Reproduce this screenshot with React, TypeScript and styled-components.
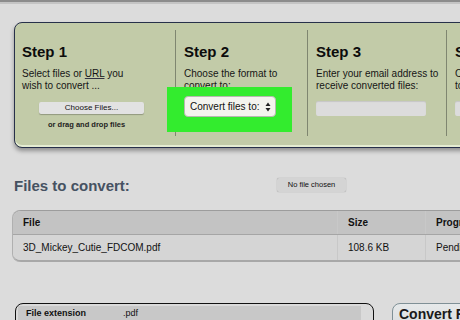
import React from 'react'
import styled, { createGlobalStyle } from 'styled-components'

const GlobalStyle = createGlobalStyle`
  html, body {
    margin: 0;
    padding: 0;
    width: 460px;
    height: 320px;
    overflow: hidden;
    background: #dcdcdc;
    font-family: "Liberation Sans", Arial, sans-serif;
    color: #111;
  }
`

const Page = styled.div`
  width: 460px;
  height: 320px;
  overflow: hidden;
  position: relative;
  border-top: 2px solid #8c8c8c;
  box-sizing: border-box;
  .topline {
    height: 2px;
    background: #c4c4c4;
  }
`

const Content = styled.div`
  padding: 18px 0 0 14px;
  width: 600px;
`

const StepsPanel = styled.div`
  display: flex;
  width: 560px;
  height: 126px;
  box-sizing: border-box;
  background: #c2cba8;
  border: 1.5px solid #27304a;
  border-radius: 8px;
  box-shadow: 0 3px 4px rgba(0, 0, 0, 0.35), inset 0 -2px 0 #e4ecd2;
`

const StepCol = styled.div<{ $w: number; $first?: boolean }>`
  width: ${p => p.$w}px;
  flex: none;
  box-sizing: border-box;
  margin: 7px 0 11px;
  padding: 13px 0 0 ${p => (p.$first ? 7 : 8)}px;
  border-left: ${p => (p.$first ? 'none' : '1px solid #7f8670')};
  display: flex;
  flex-direction: column;
`

const StepTitle = styled.h2`
  margin: 0;
  font-size: 15px;
  font-weight: bold;
  line-height: 18px;
  color: #0c0c0c;
`

const StepText = styled.p`
  margin: 7px 0 0;
  font-size: 10px;
  line-height: 12px;
  color: #151515;
  white-space: nowrap;
  u {
    text-decoration-color: #334;
  }
`

const FileButton = styled.div`
  margin: 10px 0 0 17px;
  width: 105px;
  height: 12px;
  background: #e2e2e2;
  border-radius: 2px;
  box-shadow: 0 1px 1px rgba(0, 0, 0, 0.25);
  font-size: 8px;
  line-height: 12px;
  text-align: center;
  color: #111;
`

const DropHint = styled.div`
  margin: 6px 0 0 26px;
  font-size: 7.5px;
  font-weight: bold;
  color: #222;
`

const Highlight = styled.div`
  position: relative;
  margin: -5px 0 0 -17px;
  width: 125px;
  height: 45px;
  box-sizing: border-box;
  padding: 9px 0 0 17px;
  background: #33ec2e;
`

const SelectBox = styled.div`
  width: 92px;
  height: 21px;
  box-sizing: border-box;
  background: #f4f4ee;
  border: 1px solid #b8b8b0;
  border-radius: 4px;
  display: flex;
  align-items: center;
  justify-content: space-between;
  padding: 0 4px 0 5px;
  font-size: 10px;
  color: #111;
`

const EmailInput = styled.div<{ $w: number }>`
  margin-top: 9px;
  width: ${p => p.$w}px;
  height: 15px;
  background: #dcdcdc;
  border-radius: 2px;
  box-shadow: inset 0 1px 1px rgba(0, 0, 0, 0.1);
`

const FilesHeader = styled.div`
  display: flex;
  align-items: center;
  margin-top: 27px;
  height: 20px;
`

const SectionTitle = styled.h3`
  margin: 0;
  width: 263px;
  font-size: 15px;
  font-weight: bold;
  color: #465262;
`

const NoFileButton = styled.div`
  width: 69px;
  height: 14px;
  background: #d4d4d4;
  border-radius: 2px;
  box-shadow: 0 0 1px rgba(0, 0, 0, 0.4);
  font-size: 7.5px;
  line-height: 14px;
  text-align: center;
  color: #111;
`

const Table = styled.div`
  margin: 15px 0 0 -1px;
  width: 560px;
  border-radius: 8px;
  overflow: hidden;
  border-top: 1px solid #9c9c9c;
  border-bottom: 2px solid #a8a8a8;
  box-shadow: -1px 0 0 #b0b0b0;
`

const Row = styled.div<{ $head?: boolean }>`
  display: grid;
  grid-template-columns: 324px 88px 1fr;
  height: ${p => (p.$head ? 23 : 25)}px;
  background: ${p => (p.$head ? '#c3c3c3' : '#d5d5d5')};
  border-bottom: ${p => (p.$head ? '1px solid #a5a5a5' : 'none')};
`

const Cell = styled.div<{ $head?: boolean }>`
  padding-left: 10px;
  display: flex;
  align-items: center;
  font-size: 10px;
  font-weight: ${p => (p.$head ? 'bold' : 'normal')};
  color: #111;
  white-space: nowrap;
  & + & {
    border-left: 1px solid ${p => (p.$head ? '#d6d6d6' : '#c8c8c8')};
  }
`

const Bottom = styled.div`
  display: flex;
  align-items: flex-start;
  margin-top: 41px;
  gap: 18px;
`

const OptionsBox = styled.div`
  margin-left: 1px;
  width: 359px;
  height: 40px;
  box-sizing: border-box;
  border: 1.5px solid #111;
  border-radius: 8px;
  padding: 2px 12px 0 2px;
  background: #dadada;
`

const OptionRow = styled.div`
  display: flex;
  height: 30px;
  background: #c8c8c8;
  padding-left: 8px;
  font-size: 9px;
  font-weight: bold;
  color: #111;
  span {
    width: 97px;
    line-height: 14px;
  }
  em {
    font-style: normal;
    font-weight: normal;
    line-height: 14px;
  }
`

const ConvertButton = styled.div`
  width: 120px;
  height: 40px;
  box-sizing: border-box;
  border: 1.5px solid #7f9096;
  border-radius: 8px;
  background: linear-gradient(#e6e9ea, #d2d6d8);
  padding: 2px 0 0 6px;
  font-size: 14px;
  font-weight: bold;
  color: #1a1a1a;
  white-space: nowrap;
`

const Arrows = () => (
  <svg width="6" height="10" viewBox="0 0 6 10">
    <path d="M3 0.5 L5.5 4 H0.5 Z" fill="#222" />
    <path d="M3 9.5 L5.5 6 H0.5 Z" fill="#222" />
  </svg>
)

export default function App() {
  return (
    <Page>
      <GlobalStyle />
      <div className="topline" />
      <Content>
        <StepsPanel>
          <StepCol $w={160} $first>
            <StepTitle>Step 1</StepTitle>
            <StepText>
              Select files or <u>URL</u> you
              <br />
              wish to convert ...
            </StepText>
            <FileButton>Choose Files...</FileButton>
            <DropHint>or drag and drop files</DropHint>
          </StepCol>
          <StepCol $w={132}>
            <StepTitle>Step 2</StepTitle>
            <StepText>
              Choose the format to
              <br />
              convert to:
            </StepText>
            <Highlight>
              <SelectBox>
                Convert files to:
                <Arrows />
              </SelectBox>
            </Highlight>
          </StepCol>
          <StepCol $w={139}>
            <StepTitle>Step 3</StepTitle>
            <StepText>
              Enter your email address to
              <br />
              receive converted files:
            </StepText>
            <EmailInput $w={110} />
          </StepCol>
          <StepCol $w={120}>
            <StepTitle>Step 4</StepTitle>
            <StepText>
              Convert
              <br />
              to
            </StepText>
            <EmailInput $w={100} />
          </StepCol>
        </StepsPanel>

        <FilesHeader>
          <SectionTitle>Files to convert:</SectionTitle>
          <NoFileButton>No file chosen</NoFileButton>
        </FilesHeader>

        <Table>
          <Row $head>
            <Cell $head>File</Cell>
            <Cell $head>Size</Cell>
            <Cell $head>Progress</Cell>
          </Row>
          <Row>
            <Cell>3D_Mickey_Cutie_FDCOM.pdf</Cell>
            <Cell>108.6 KB</Cell>
            <Cell>Pending</Cell>
          </Row>
        </Table>

        <Bottom>
          <OptionsBox>
            <OptionRow>
              <span>File extension</span>
              <em>.pdf</em>
            </OptionRow>
          </OptionsBox>
          <ConvertButton>Convert Files</ConvertButton>
        </Bottom>
      </Content>
    </Page>
  )
}
